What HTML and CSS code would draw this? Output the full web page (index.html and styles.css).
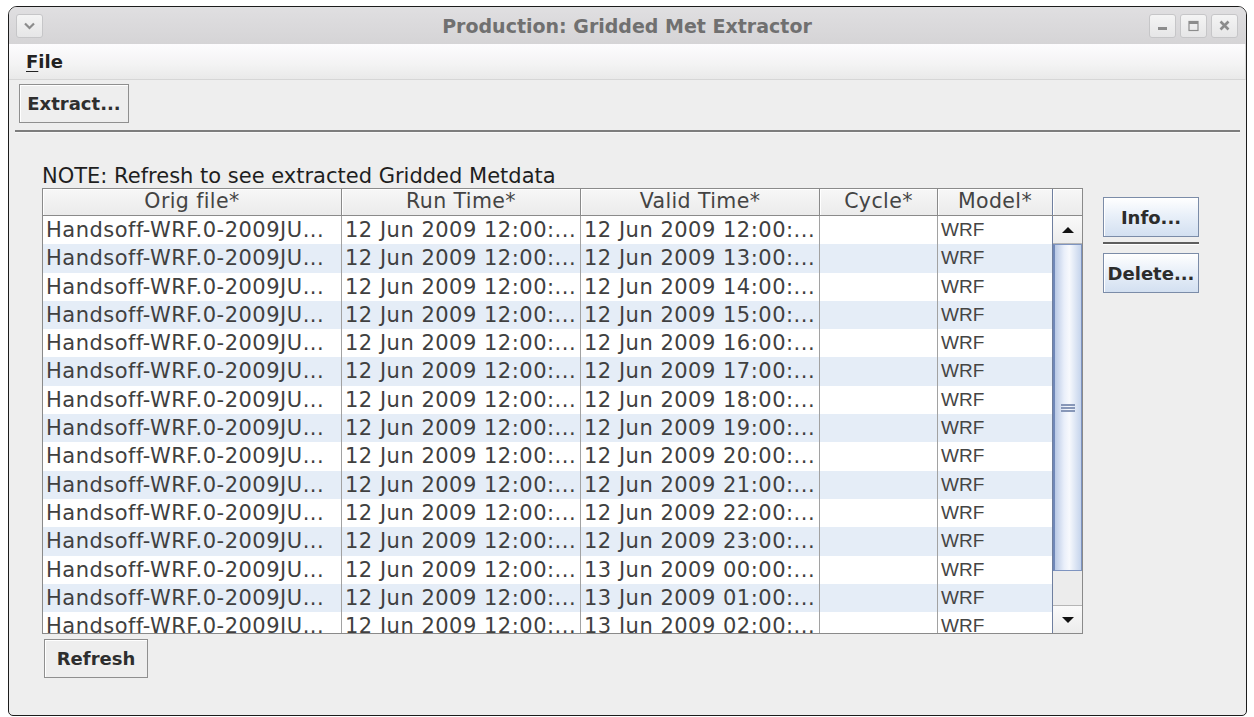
FILE: index.html
```html
<!DOCTYPE html>
<html lang="en">
<head>
<meta charset="utf-8">
<title>Production: Gridded Met Extractor</title>
<link rel="stylesheet" href="styles.css">
</head>
<body>
<div class="window">
  <div class="titlebar">
    <div class="tb-left">
      <span class="wbtn">
        <svg width="25" height="22" viewBox="0 0 25 22"><polyline points="8,8.5 12.5,13 17,8.5" fill="none" stroke="#8c8c8c" stroke-width="2.2"/></svg>
      </span>
    </div>
    <div class="title">Production: Gridded Met Extractor</div>
    <div class="tb-right">
      <span class="wbtn">
        <svg width="25" height="22" viewBox="0 0 25 22"><rect x="8" y="12" width="9" height="3" fill="#8c8c8c"/></svg>
      </span>
      <span class="wbtn">
        <svg width="25" height="22" viewBox="0 0 25 22"><rect x="8" y="6.5" width="9" height="9" fill="none" stroke="#8c8c8c" stroke-width="1.2"/><rect x="8" y="6.5" width="9" height="2.5" fill="#8c8c8c"/></svg>
      </span>
      <span class="wbtn">
        <svg width="25" height="22" viewBox="0 0 25 22"><path d="M8.5 6.5 L16.5 14.5 M16.5 6.5 L8.5 14.5" stroke="#8c8c8c" stroke-width="2.6"/></svg>
      </span>
    </div>
  </div>

  <div class="menubar">
    <span class="menu"><u>F</u>ile</span>
  </div>

  <div class="toolbar">
    <button class="plain-btn">Extract...</button>
  </div>
  <div class="separator"></div>

  <div class="content">
    <div class="main">
      <div class="note">NOTE: Refresh to see extracted Gridded Metdata</div>
      <div class="table">
        <div class="grid">
          <div class="thead">
            <div class="th c-file">Orig file*</div>
            <div class="th c-run">Run Time*</div>
            <div class="th c-valid">Valid Time*</div>
            <div class="th c-cycle">Cycle*</div>
            <div class="th c-model">Model*</div>
          </div>
          <div class="tbody">
            <div class="tr"><div class="td c-file">Handsoff-WRF.0-2009JU...</div><div class="td c-run">12 Jun 2009 12:00:...</div><div class="td c-valid">12 Jun 2009 12:00:...</div><div class="td c-cycle"></div><div class="td c-model">WRF</div></div>
            <div class="tr"><div class="td c-file">Handsoff-WRF.0-2009JU...</div><div class="td c-run">12 Jun 2009 12:00:...</div><div class="td c-valid">12 Jun 2009 13:00:...</div><div class="td c-cycle"></div><div class="td c-model">WRF</div></div>
            <div class="tr"><div class="td c-file">Handsoff-WRF.0-2009JU...</div><div class="td c-run">12 Jun 2009 12:00:...</div><div class="td c-valid">12 Jun 2009 14:00:...</div><div class="td c-cycle"></div><div class="td c-model">WRF</div></div>
            <div class="tr"><div class="td c-file">Handsoff-WRF.0-2009JU...</div><div class="td c-run">12 Jun 2009 12:00:...</div><div class="td c-valid">12 Jun 2009 15:00:...</div><div class="td c-cycle"></div><div class="td c-model">WRF</div></div>
            <div class="tr"><div class="td c-file">Handsoff-WRF.0-2009JU...</div><div class="td c-run">12 Jun 2009 12:00:...</div><div class="td c-valid">12 Jun 2009 16:00:...</div><div class="td c-cycle"></div><div class="td c-model">WRF</div></div>
            <div class="tr"><div class="td c-file">Handsoff-WRF.0-2009JU...</div><div class="td c-run">12 Jun 2009 12:00:...</div><div class="td c-valid">12 Jun 2009 17:00:...</div><div class="td c-cycle"></div><div class="td c-model">WRF</div></div>
            <div class="tr"><div class="td c-file">Handsoff-WRF.0-2009JU...</div><div class="td c-run">12 Jun 2009 12:00:...</div><div class="td c-valid">12 Jun 2009 18:00:...</div><div class="td c-cycle"></div><div class="td c-model">WRF</div></div>
            <div class="tr"><div class="td c-file">Handsoff-WRF.0-2009JU...</div><div class="td c-run">12 Jun 2009 12:00:...</div><div class="td c-valid">12 Jun 2009 19:00:...</div><div class="td c-cycle"></div><div class="td c-model">WRF</div></div>
            <div class="tr"><div class="td c-file">Handsoff-WRF.0-2009JU...</div><div class="td c-run">12 Jun 2009 12:00:...</div><div class="td c-valid">12 Jun 2009 20:00:...</div><div class="td c-cycle"></div><div class="td c-model">WRF</div></div>
            <div class="tr"><div class="td c-file">Handsoff-WRF.0-2009JU...</div><div class="td c-run">12 Jun 2009 12:00:...</div><div class="td c-valid">12 Jun 2009 21:00:...</div><div class="td c-cycle"></div><div class="td c-model">WRF</div></div>
            <div class="tr"><div class="td c-file">Handsoff-WRF.0-2009JU...</div><div class="td c-run">12 Jun 2009 12:00:...</div><div class="td c-valid">12 Jun 2009 22:00:...</div><div class="td c-cycle"></div><div class="td c-model">WRF</div></div>
            <div class="tr"><div class="td c-file">Handsoff-WRF.0-2009JU...</div><div class="td c-run">12 Jun 2009 12:00:...</div><div class="td c-valid">12 Jun 2009 23:00:...</div><div class="td c-cycle"></div><div class="td c-model">WRF</div></div>
            <div class="tr"><div class="td c-file">Handsoff-WRF.0-2009JU...</div><div class="td c-run">12 Jun 2009 12:00:...</div><div class="td c-valid">13 Jun 2009 00:00:...</div><div class="td c-cycle"></div><div class="td c-model">WRF</div></div>
            <div class="tr"><div class="td c-file">Handsoff-WRF.0-2009JU...</div><div class="td c-run">12 Jun 2009 12:00:...</div><div class="td c-valid">13 Jun 2009 01:00:...</div><div class="td c-cycle"></div><div class="td c-model">WRF</div></div>
            <div class="tr"><div class="td c-file">Handsoff-WRF.0-2009JU...</div><div class="td c-run">12 Jun 2009 12:00:...</div><div class="td c-valid">13 Jun 2009 02:00:...</div><div class="td c-cycle"></div><div class="td c-model">WRF</div></div>
          </div>
        </div>
        <div class="vscroll">
          <div class="vs-head"></div>
          <div class="vs-btn"><span class="arrow-up"></span></div>
          <div class="vs-thumb"><span class="grip"></span></div>
          <div class="vs-track"></div>
          <div class="vs-btn vs-btn-down"><span class="arrow-down"></span></div>
        </div>
      </div>
      <button class="plain-btn refresh">Refresh</button>
    </div>

    <div class="side">
      <button class="ocean-btn">Info...</button>
      <div class="side-sep"></div>
      <button class="ocean-btn">Delete...</button>
    </div>
  </div>
</div>
</body>
</html>
```

FILE: styles.css
```css
* {
  box-sizing: border-box;
}

html,
body {
  margin: 0;
  padding: 0;
  background: #ffffff;
}

body {
  font-family: "DejaVu Sans", sans-serif;
  color: #333333;
}

button {
  font-family: inherit;
  margin: 0;
  padding: 0;
  cursor: default;
}

/* ---------- window frame ---------- */
.window {
  margin: 6px 0 0 8px;
  width: 1239px;
  height: 710px;
  border: 1px solid #1c1c1c;
  border-radius: 9px 9px 5px 5px;
  overflow: hidden;
  background: #eeeeee;
  display: flex;
  flex-direction: column;
}

.titlebar {
  height: 37px;
  flex: none;
  background: linear-gradient(#e0dfe1, #d5d4d6);
  display: grid;
  grid-template-columns: 1fr auto 1fr;
  align-items: center;
  padding: 0 8px 0 7px;
}

.tb-left {
  display: flex;
}

.tb-right {
  display: flex;
  justify-content: flex-end;
  gap: 4px;
}

.wbtn {
  width: 27px;
  height: 24px;
  border: 1px solid #c6c6c8;
  border-radius: 3px;
  background: linear-gradient(#f4f4f4, #e6e6e7);
  display: flex;
}

.title {
  font-weight: bold;
  font-size: 19px;
  color: #707070;
  white-space: nowrap;
}

.menubar {
  height: 36px;
  flex: none;
  background: linear-gradient(#fdfcfe, #f3f3f3 60%, #e9e9e9);
  border-bottom: 1px solid #d6d6d6;
  border-right: 1px solid #dcdcdc;
  display: flex;
  align-items: center;
  padding-left: 17px;
}

.menu {
  font-weight: bold;
  font-size: 18px;
  color: #222222;
}

.menu u {
  text-decoration-thickness: 1px;
  text-underline-offset: 3px;
}

.toolbar {
  height: 50px;
  flex: none;
  padding: 4px 0 0 10px;
}

.plain-btn {
  width: 110px;
  height: 39px;
  border: 1px solid #8f8f8f;
  background: #eeeeee;
  box-shadow: inset 1px 1px 0 #ffffff;
  font-weight: bold;
  font-size: 18px;
  color: #2e2e2e;
}

.separator {
  flex: none;
  margin: 0 6px;
  height: 3px;
  border-top: 2px solid #7d7d7d;
  border-bottom: 1px solid #f8f8f8;
}

/* ---------- content ---------- */
.content {
  flex: 1;
  display: flex;
  padding: 31px 0 0 33px;
}

.main {
  display: flex;
  flex-direction: column;
  align-items: flex-start;
}

.note {
  font-size: 21px;
  line-height: 24px;
  height: 24px;
  color: #1e1e1e;
  white-space: nowrap;
}

.table {
  display: flex;
  width: 1041px;
  border: 1px solid #8a8a8a;
  background: #ffffff;
}

.grid {
  width: 1010px;
  display: flex;
  flex-direction: column;
}

.thead {
  display: flex;
  height: 27px;
  border-bottom: 1px solid #8a8a8a;
}

.th {
  height: 26px;
  line-height: 25px;
  font-size: 20.5px;
  letter-spacing: 0.4px;
  color: #444444;
  text-align: center;
  background: linear-gradient(#f7f7f7, #ebebeb);
  border-right: 1px solid #8a8a8a;
  box-shadow: inset 1px 1px 0 #ffffff;
  white-space: nowrap;
  overflow: hidden;
}

.tbody {
  height: 417px;
  overflow: hidden;
}

.tr {
  display: flex;
  height: 28.3px;
  background: #ffffff;
}

.tr:nth-child(even) {
  background: #e5edf7;
}

.td {
  height: 28.3px;
  line-height: 28px;
  font-size: 21px;
  letter-spacing: 0.5px;
  color: #404040;
  padding-left: 3px;
  border-right: 1px solid #a2a2a2;
  white-space: nowrap;
  overflow: hidden;
}

.c-file { width: 299px; }
.c-run { width: 239px; }
.c-valid { width: 239px; }
.c-cycle { width: 118px; }
.c-model { width: 115px; border-right: 1px solid #6f7f9f; }

.td.c-model {
  font-family: "Liberation Sans", Arial, sans-serif;
  font-size: 19px;
  letter-spacing: 0;
  color: #454545;
}

/* ---------- vertical scrollbar ---------- */
.vscroll {
  width: 29px;
  display: flex;
  flex-direction: column;
  background: #eeeeee;
}

.vs-head {
  height: 27px;
  flex: none;
  background: linear-gradient(#f7f7f7, #ebebeb);
  border-bottom: 1px solid #8a8a8a;
  box-shadow: inset 1px 1px 0 #ffffff;
}

.vs-btn {
  height: 28px;
  flex: none;
  background: linear-gradient(#fafafa, #ececec);
  border-bottom: 1px solid #b5b5b5;
  display: flex;
  align-items: center;
  justify-content: center;
}

.vs-btn-down {
  border-bottom: none;
  border-top: 1px solid #b5b5b5;
}

.arrow-up {
  width: 0;
  height: 0;
  border-left: 6px solid transparent;
  border-right: 6px solid transparent;
  border-bottom: 6px solid #111111;
}

.arrow-down {
  width: 0;
  height: 0;
  border-left: 6px solid transparent;
  border-right: 6px solid transparent;
  border-top: 6px solid #111111;
}

.vs-thumb {
  height: 327px;
  flex: none;
  border: 1px solid #7e94c0;
  border-left: 2px solid #7088b8;
  background: linear-gradient(to right, #b9c9e5, #e9effa 35%, #f7f9fd 55%, #c5d4ec);
  display: flex;
  align-items: center;
  justify-content: center;
}

.grip {
  width: 14px;
  height: 8px;
  background: repeating-linear-gradient(#8797b8 0 2px, transparent 2px 3px);
}

.vs-track {
  flex: 1;
  background: #ececec;
}

.refresh {
  width: 104px;
  margin: 5px 0 0 2px;
}

/* ---------- right-hand actions ---------- */
.side {
  margin-left: 20px;
  padding-top: 33px;
  display: flex;
  flex-direction: column;
  width: 96px;
}

.ocean-btn {
  width: 96px;
  height: 40px;
  border: 1px solid #7b8ca8;
  background: linear-gradient(#ffffff, #e9f0f9 45%, #d3e0f1);
  box-shadow: inset 1px 1px 0 #ffffff;
  font-weight: bold;
  font-size: 18px;
  color: #2c2c2c;
}

.side-sep {
  margin: 5px 0 8px;
  height: 3px;
  border-top: 2px solid #5e5e5e;
  border-bottom: 1px solid #ffffff;
}
```
